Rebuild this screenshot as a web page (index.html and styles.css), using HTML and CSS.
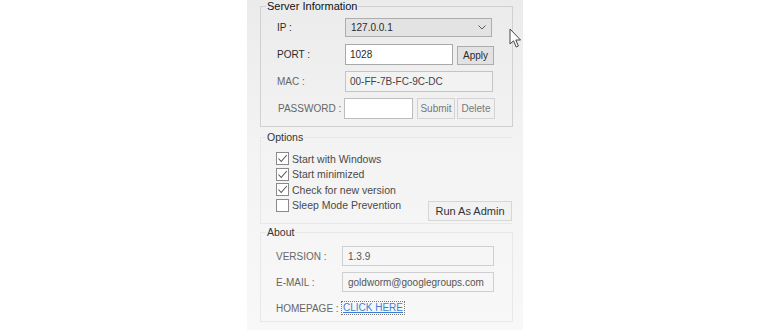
FILE: index.html
```html
<!DOCTYPE html>
<html lang="en">
    <head>
        <meta charset="UTF-8">
        <meta name="viewport" content="width=device-width, initial-scale=1.0">
        <title>Server Settings</title>
        <link rel="stylesheet" href="styles.css">
    </head>
    <body>
        <div class="panel">
            <fieldset class="group">
                <legend>Server Information</legend>
                <div class="form form-server">
                    <span class="lbl lbl-dark">IP :</span>
                    <div class="combo">
                        <span>127.0.0.1</span>
                        <svg width="8" height="5" viewBox="0 0 8 5"><path d="M0.5 0.5 L4 4 L7.5 0.5" fill="none" stroke="#5a5a5a" stroke-width="1"/></svg>
                    </div>
                    <span class="lbl lbl-dark">PORT :</span>
                    <div class="line">
                        <input type="text" class="field field-port" value="1028">
                        <button class="btn btn-apply">Apply</button>
                    </div>
                    <span class="lbl">MAC :</span>
                    <div class="line">
                        <input type="text" class="field field-ro field-mac" value="00-FF-7B-FC-9C-DC" readonly>
                    </div>
                    <span class="lbl lbl-pwd">PASSWORD :</span>
                    <div class="line line-pwd">
                        <input type="password" class="field field-pwd">
                        <button class="btn btn-soft">Submit</button>
                        <button class="btn btn-soft">Delete</button>
                    </div>
                </div>
            </fieldset>

            <fieldset class="group group-soft group-options">
                <legend>Options</legend>
                <div class="options">
                    <div class="checks">
                        <label class="check"><span class="box on"><svg width="11" height="11" viewBox="0 0 11 11"><path d="M1.5 5.5 L4.2 8.5 L9.8 2" fill="none" stroke="#555" stroke-width="1.1"/></svg></span>Start with Windows</label>
                        <label class="check"><span class="box on"><svg width="11" height="11" viewBox="0 0 11 11"><path d="M1.5 5.5 L4.2 8.5 L9.8 2" fill="none" stroke="#555" stroke-width="1.1"/></svg></span>Start minimized</label>
                        <label class="check"><span class="box on"><svg width="11" height="11" viewBox="0 0 11 11"><path d="M1.5 5.5 L4.2 8.5 L9.8 2" fill="none" stroke="#555" stroke-width="1.1"/></svg></span>Check for new version</label>
                        <label class="check"><span class="box"></span>Sleep Mode Prevention</label>
                    </div>
                    <button class="btn btn-admin">Run As Admin</button>
                </div>
            </fieldset>

            <fieldset class="group group-soft group-about">
                <legend>About</legend>
                <div class="form form-about">
                    <span class="lbl">VERSION :</span>
                    <div class="field field-ro field-about">1.3.9</div>
                    <span class="lbl">E-MAIL :</span>
                    <div class="field field-ro field-about">goldworm@googlegroups.com</div>
                    <span class="lbl">HOMEPAGE :</span>
                    <div class="line"><a class="link" href="#">CLICK HERE</a></div>
                </div>
            </fieldset>

            <svg class="cursor" width="13" height="21" viewBox="0 0 13 21">
                <path d="M1 1 L1 16 L4.5 12.8 L7.2 19 L9.4 18 L6.8 12 L11.5 12 Z" fill="#fff" stroke="#444" stroke-width="1" stroke-linejoin="round"/>
            </svg>
        </div>
    </body>
</html>
```

FILE: styles.css
```css
:root {
    /* colours */
    --panel-top: #ebebeb;
    --panel-bot: #f8f8f8;
    --grp-line:  #d0d0d0; /* server group */
    --grp-soft:  #e8e8e8; /* options / about */
    --txt:       #2a2a2a;
    --txt-dim:   #666;
    --fld-line:  #a9a9a9;
    --ro-bg:     #f2f2f2;
    --ro-line:   #c4c4c4;
    --btn-bg:    #e2e2e2;
    --btn-line:  #adadad;
    --link:      #3b7ed6;
}
* {
    box-sizing: border-box;
}
body {
    margin: 0px;
    background: #fff;
    font-family: "Liberation Sans", Arial, sans-serif;
    font-size: 10px;
    color: var(--txt);
}
.panel {
    position: relative;
    width: 276px;
    height: 330px;
    margin-left: 247px;
    padding: 0px 10px 0px 13px;
    background: linear-gradient(var(--panel-top), #f3f3f3 45%, var(--panel-bot));
}

/* #region Groups */
.group {
    margin: 0px;
    padding: 0px;
    min-width: 0px;
    border: 1px solid var(--grp-line);
}
.group > legend {
    margin-left: 5px;
    padding: 0px 1px;
    line-height: 13px;
    font-size: 11px;
    color: #111;
}
.group-soft {
    border-color: var(--grp-soft);
}
.group-soft > legend {
    font-size: 10.5px;
    color: #333;
}
.group-options {
    margin-top: 4px;
    border-right-color: transparent;
}
.group-about {
    margin-top: 2px;
}
/* #endregion Groups */

.form {
    display: grid;
    align-items: center;
    row-gap: 6px;
}
.form-server {
    grid-template-columns: 68px auto;
    grid-auto-rows: 21px;
    padding: 4px 0px 7px 16px;
}
.form-about {
    grid-template-columns: 66px auto;
    grid-auto-rows: 20px;
    padding: 7px 0px 3px 15px;
}
.lbl {
    color: var(--txt-dim);
    white-space: nowrap;
}
.lbl-dark {
    color: var(--txt);
}
.lbl-pwd {
    padding-left: 1px;
}
.line {
    display: flex;
    align-items: center;
    gap: 4px;
    height: 100%;
}
.line-pwd {
    margin-left: -1px;
}
.line-pwd > .btn + .btn {
    margin-left: -2px;
}

.combo {
    display: flex;
    align-items: center;
    justify-content: space-between;
    width: 147px;
    height: 19px;
    padding: 0px 5px 0px 5px;
    background: #e3e3e3;
    border: 1px solid var(--btn-line);
}
.field {
    height: 21px;
    margin: 0px;
    padding: 0px 4px;
    font-family: inherit;
    font-size: 10px;
    color: var(--txt);
    background: #fff;
    border: 1px solid var(--fld-line);
    outline: none;
}
.field-port {
    width: 108px;
}
.field-ro {
    background: var(--ro-bg);
    border-color: var(--ro-line);
    color: #444;
}
.field-mac {
    width: 148px;
}
.field-pwd {
    width: 69px;
    border-color: #bdbdbd;
}
.field-about {
    display: flex;
    align-items: center;
    width: 152px;
    height: 20px;
    padding: 0px 5px;
    background: #f6f6f6;
    border-color: #cfcfcf;
    color: #555;
}

.btn {
    margin: 0px;
    padding: 0px;
    font-family: inherit;
    font-size: 10px;
    color: var(--txt);
    background: var(--btn-bg);
    border: 1px solid var(--btn-line);
}
.btn-apply {
    width: 37px;
    height: 19px;
    align-self: flex-end;
}
.btn-soft {
    width: 38px;
    height: 21px;
    color: #777;
    background: #f1f1f1;
    border-color: #d3d3d3;
}

/* #region Options */
.options {
    display: flex;
    align-items: flex-end;
    padding: 7px 0px 1px 15px;
}
.checks {
    flex-grow: 1;
    padding-bottom: 9px;
}
.check {
    display: flex;
    align-items: center;
    height: 15.5px;
    font-size: 10.5px;
    color: #4a4a4a;
}
.box {
    display: inline-flex;
    align-items: center;
    justify-content: center;
    width: 13px;
    height: 13px;
    margin-right: 3px;
    background: #fff;
    border: 1px solid #8a8a8a;
}
.btn-admin {
    width: 84px;
    height: 20px;
    margin-bottom: 1px;
    font-size: 11px;
    color: #333;
    background: #f2f2f2;
    border-color: #d6d6d6;
}
/* #endregion Options */

.link {
    padding: 0px 1px;
    color: var(--link);
    text-decoration: underline;
    outline: 1px dotted #777;
    line-height: 12px;
}
.cursor {
    position: absolute;
    left: 262px;
    top: 28px;
}
```
